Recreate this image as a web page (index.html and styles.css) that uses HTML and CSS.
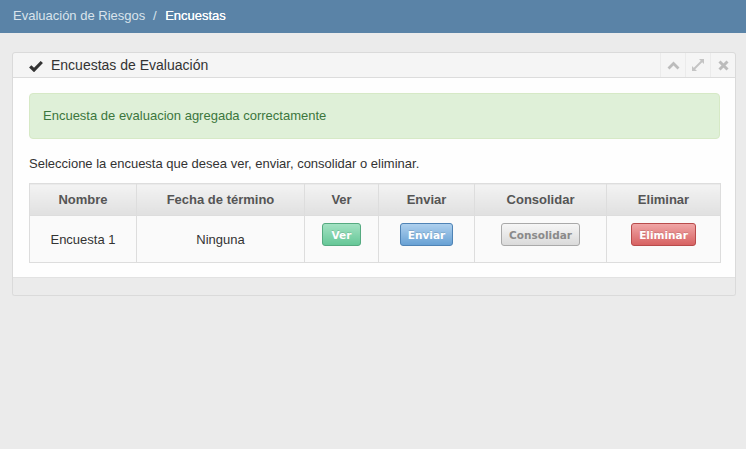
FILE: index.html
```html
<!DOCTYPE html>
<html lang="es">
<head>
<meta charset="utf-8">
<title>Encuestas</title>
<link rel="stylesheet" href="styles.css">
</head>
<body>
<div class="topbar">
  <span class="crumb">Evaluación de Riesgos</span>
  <span class="sep">/</span>
  <span class="crumb-active">Encuestas</span>
</div>
<div class="main">
  <div class="widget">
    <div class="widget-header">
      <div class="widget-title">
        <svg class="check" width="14" height="12" viewBox="0 0 14 12"><path d="M1.2 6.3 L5 10 L12.8 2" fill="none" stroke="#333" stroke-width="3.2"/></svg>
        <span>Encuestas de Evaluación</span>
      </div>
      <div class="widget-tools">
        <span class="tool"><svg width="13" height="9" viewBox="0 0 13 9"><path d="M1.5 7.5 L6.5 2.5 L11.5 7.5" fill="none" stroke="#bcbcbc" stroke-width="2.8"/></svg></span>
        <span class="tool"><svg width="14" height="14" viewBox="0 0 14 14"><path d="M8 1 H13 V6 Z M1 8 V13 H6 Z" fill="#c4c4c4"/><path d="M11 3 L3 11" stroke="#c4c4c4" stroke-width="2"/></svg></span>
        <span class="tool"><svg width="11" height="11" viewBox="0 0 11 11"><path d="M1.5 1.5 L9.5 9.5 M9.5 1.5 L1.5 9.5" stroke="#bcbcbc" stroke-width="3"/></svg></span>
      </div>
    </div>
    <div class="widget-body">
      <div class="alert">Encuesta de evaluacion agregada correctamente</div>
      <p class="intro">Seleccione la encuesta que desea ver, enviar, consolidar o eliminar.</p>
      <table class="grid">
        <colgroup>
          <col class="c1"><col class="c2"><col class="c3"><col class="c4"><col class="c5"><col class="c6">
        </colgroup>
        <thead>
          <tr><th>Nombre</th><th>Fecha de término</th><th>Ver</th><th>Enviar</th><th>Consolidar</th><th>Eliminar</th></tr>
        </thead>
        <tbody>
          <tr>
            <td>Encuesta 1</td>
            <td>Ninguna</td>
            <td><button class="btn btn-green">Ver</button></td>
            <td><button class="btn btn-blue">Enviar</button></td>
            <td><button class="btn btn-grey">Consolidar</button></td>
            <td><button class="btn btn-red">Eliminar</button></td>
          </tr>
        </tbody>
      </table>
    </div>
    <div class="widget-footer"></div>
  </div>
</div>
</body>
</html>
```
FILE: styles.css
```css
html, body {
  margin: 0;
  padding: 0;
}
body {
  background: #ebebeb;
  font-family: "Liberation Sans", Arial, sans-serif;
  font-size: 13px;
  color: #333;
}
.topbar {
  height: 33px;
  line-height: 32px;
  background: #5a83a7;
  padding-left: 13px;
  font-size: 13px;
}
.crumb { color: #d9e3ec; }
.sep { color: #d9e3ec; margin: 0 5px 0 4px; }
.crumb-active { color: #fff; text-shadow: 0 0 0.4px #fff; }

.main {
  padding: 19px 10px 0 12px;
}
.widget {
  border: 1px solid #dadada;
  border-radius: 3px;
  background: #ececec;
  box-shadow: 0 1px 1px rgba(0,0,0,0.03);
}
.widget-header {
  height: 24px;
  background: #f5f5f5;
  border-bottom: 1px solid #dcdcdc;
  border-radius: 3px 3px 0 0;
  display: flex;
  justify-content: space-between;
  align-items: stretch;
}
.widget-title {
  display: flex;
  align-items: center;
  padding-left: 16px;
  font-size: 14px;
  color: #333;
}
.widget-title .check { margin-right: 8px; margin-top: 1px; }
.widget-tools {
  display: flex;
}
.tool {
  width: 24px;
  border-left: 1px solid #ebebeb;
  display: flex;
  align-items: center;
  justify-content: center;
}
.widget-body {
  background: #fefefe;
  padding: 15px 15px 14px 16px;
  border-bottom: 1px solid #e2e2e2;
}
.alert {
  background: #dff0d8;
  border: 1px solid #d6e9c6;
  border-radius: 4px;
  color: #3c763d;
  padding: 14px 13px;
  line-height: 16px;
}
.intro {
  margin: 16px 0 10px;
  line-height: 18px;
}
.grid {
  width: 100%;
  border-collapse: collapse;
  table-layout: fixed;
}
.c1 { width: 107px; }
.c2 { width: 168px; }
.c3 { width: 74px; }
.c4 { width: 96px; }
.c5 { width: 132px; }
.c6 { width: 114px; }
.grid th, .grid td {
  border: 1px solid #dddddd;
  text-align: center;
}
.grid th {
  height: 31px;
  padding: 0;
  font-weight: bold;
  color: #555;
  background: linear-gradient(#f3f3f3, #e0e0e0);
}
.grid td {
  height: 46px;
  padding: 0;
  background: #fafafa;
  color: #333;
}
.btn {
  font-family: "DejaVu Sans", Verdana, sans-serif;
  font-size: 10.5px;
  font-weight: bold;
  height: 23px;
  padding: 0 7px;
  margin-bottom: 9px;
  border-radius: 3px;
  border: 1px solid;
  color: #fff;
  text-shadow: 0 -1px 0 rgba(0,0,0,0.12);
  cursor: pointer;
  vertical-align: middle;
}
.btn-green {
  min-width: 39px;
  background: linear-gradient(#a3e2c3, #66c797);
  border-color: #55aa80;
}
.btn-blue {
  background: linear-gradient(#aed0ee, #68a1d4);
  border-color: #4f83b5;
}
.btn-grey {
  background: linear-gradient(#f6f6f6, #dadada);
  border-color: #a9a9a9;
  color: #8a8a8a;
  text-shadow: none;
}
.btn-red {
  background: linear-gradient(#f0a6a6, #d76262);
  border-color: #b84b4b;
}
.widget-footer {
  height: 17px;
  background: #ebebeb;
  border-radius: 0 0 3px 3px;
}
```
